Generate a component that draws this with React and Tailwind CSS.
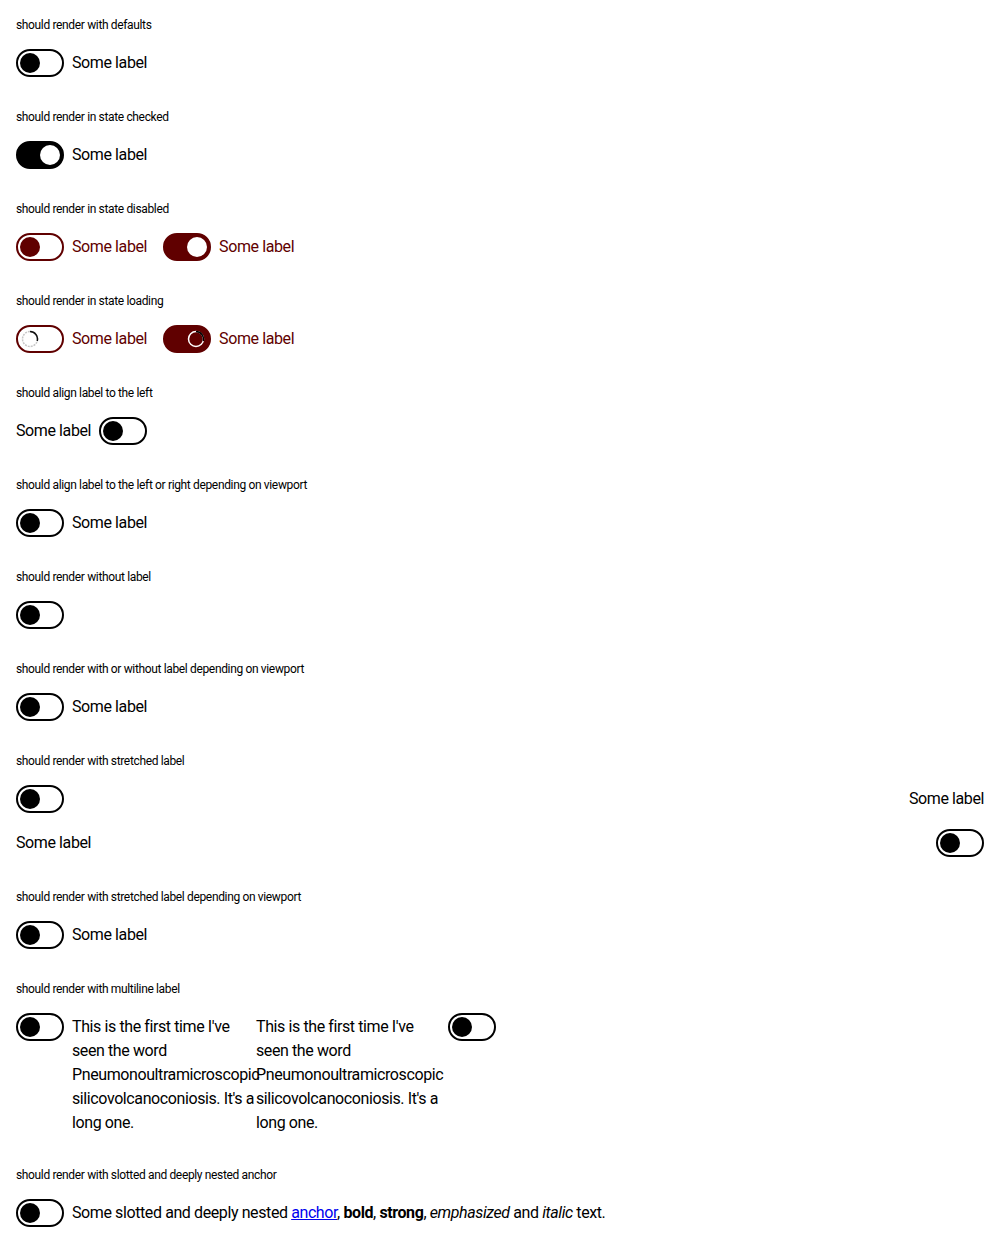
import React from 'react';

const font = { fontFamily: 'Roboto, "Liberation Sans", sans-serif' };

const Spinner = ({ checked }) => (
    <svg width="18" height="18" viewBox="0 0 18 18" className="block">
        <circle cx="9" cy="9" r="7.5" fill="none" stroke={checked ? '#ffffff' : '#c8c8c8'} strokeWidth="1.5" strokeDasharray={checked ? '' : '2 1'} />
        <path d="M9 1.5 A7.5 7.5 0 0 1 16.2 11" fill="none" stroke={checked ? '#000000' : '#111111'} strokeWidth="1.5" />
    </svg>
);

const Toggle = ({ checked = false, disabled = false, loading = false }) => {
    const color = disabled || loading ? 'border-[#600000]' : 'border-black';
    const bg = checked ? (disabled || loading ? 'bg-[#600000]' : 'bg-black') : 'bg-white';
    const knob = checked ? 'bg-white' : (disabled || loading ? 'bg-[#600000]' : 'bg-black');
    return (
        <span className={`relative flex shrink-0 w-12 h-7 rounded-full border-2 ${color} ${bg}`}>
            {loading ? (
                <span className={`absolute top-[3px] w-[18px] h-[18px] ${checked ? 'left-[22px]' : 'left-[3px]'}`}>
                    <Spinner checked={checked} />
                </span>
            ) : (
                <span className={`absolute top-[2px] w-5 h-5 rounded-full ${knob} ${checked ? 'left-[22px]' : 'left-[2px]'}`} />
            )}
        </span>
    );
};

const Label = ({ children, muted }) => (
    <span className={`block text-base leading-6 tracking-[-0.4px] ${muted ? 'text-[#600000]' : 'text-black'}`}>{children}</span>
);

const Item = ({ label = 'Some label', left, ...props }) => (
    <div className="flex w-fit items-center gap-2 h-7">
        {left && <Label muted={props.disabled || props.loading}>{label}</Label>}
        <Toggle {...props} />
        {!left && label && <Label muted={props.disabled || props.loading}>{label}</Label>}
    </div>
);

const Section = ({ title, children }) => (
    <section className="mb-8">
        <h3 className="text-xs leading-4 tracking-[-0.35px] text-black mb-4 font-normal">{title}</h3>
        {children}
    </section>
);

// zero-width space lets the long word break where the reference breaks it
const longText = "This is the first time I've seen the word Pneumonoultramicroscopic\u200Bsilicovolcanoconiosis. It's a long one.";

export default function App() {
    return (
        <div className="bg-white min-h-screen px-4 pt-[17px]" style={font}>
            <Section title="should render with defaults">
                <Item />
            </Section>
            <Section title="should render in state checked">
                <Item checked />
            </Section>
            <Section title="should render in state disabled">
                <div className="flex gap-4">
                    <Item disabled />
                    <Item disabled checked />
                </div>
            </Section>
            <Section title="should render in state loading">
                <div className="flex gap-4">
                    <Item loading />
                    <Item loading checked />
                </div>
            </Section>
            <Section title="should align label to the left">
                <Item left />
            </Section>
            <Section title="should align label to the left or right depending on viewport">
                <Item />
            </Section>
            <Section title="should render without label">
                <Item label="" />
            </Section>
            <Section title="should render with or without label depending on viewport">
                <Item />
            </Section>
            <Section title="should render with stretched label">
                <div className="flex flex-col gap-4">
                    <div className="flex items-center justify-between h-7">
                        <Toggle />
                        <Label>Some label</Label>
                    </div>
                    <div className="flex items-center justify-between h-7">
                        <Label>Some label</Label>
                        <Toggle />
                    </div>
                </div>
            </Section>
            <Section title="should render with stretched label depending on viewport">
                <Item />
            </Section>
            <Section title="should render with multiline label">
                <div className="flex items-start">
                    <div className="flex items-start gap-2">
                        <Toggle />
                        <span className="w-[184px] pt-[2px]">
                            <Label>{longText}</Label>
                        </span>
                    </div>
                    <div className="flex items-start gap-2">
                        <span className="w-[184px] pt-[2px]">
                            <Label>{longText}</Label>
                        </span>
                        <Toggle />
                    </div>
                </div>
            </Section>
            <Section title="should render with slotted and deeply nested anchor">
                <div className="flex items-center gap-2 h-7">
                    <Toggle />
                    <Label>
                        Some slotted and deeply nested <a href="#" className="text-[#0000ee] underline">anchor</a>, <b className="font-bold">bold</b>, <strong className="font-bold">strong</strong>, <em className="italic">emphasized</em> and <i className="italic">italic</i> text.
                    </Label>
                </div>
            </Section>
        </div>
    );
}
